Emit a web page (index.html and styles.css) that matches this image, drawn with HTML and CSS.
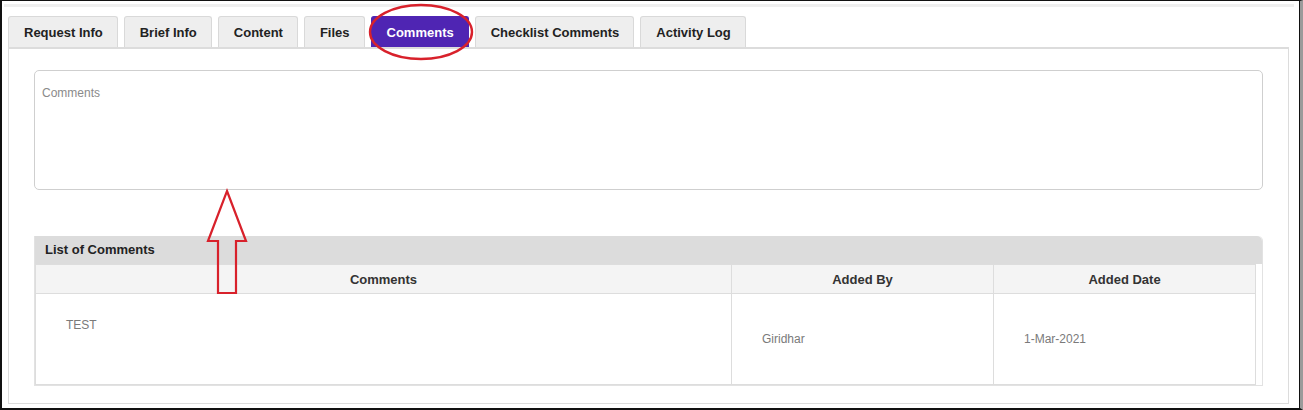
FILE: index.html
```html
<!DOCTYPE html>
<html lang="en">
<head>
    <meta charset="UTF-8">
    <meta name="viewport" content="width=device-width, initial-scale=1.0">
    <title>Request Comments</title>
    <link rel="stylesheet" href="styles.css">
</head>
<body>
    <div class="frame">
        <div class="top-strip"></div>

        <ul class="tabs">
            <li class="tab">Request Info</li>
            <li class="tab">Brief Info</li>
            <li class="tab">Content</li>
            <li class="tab">Files</li>
            <li class="tab active">Comments</li>
            <li class="tab">Checklist Comments</li>
            <li class="tab">Activity Log</li>
        </ul>

        <div class="panel">
            <textarea class="comment-box" placeholder="Comments"></textarea>

            <div class="list-box">
                <div class="list-title">List of Comments</div>
                <table class="comments-table">
                    <thead>
                        <tr>
                            <th class="col-comment">Comments</th>
                            <th class="col-by">Added By</th>
                            <th>Added Date</th>
                        </tr>
                    </thead>
                    <tbody>
                        <tr class="comment-row">
                            <td class="cell-top">TEST</td>
                            <td>Giridhar</td>
                            <td>1-Mar-2021</td>
                        </tr>
                    </tbody>
                </table>
            </div>
        </div>

        <!-- red markup drawn over the screenshot -->
        <svg class="markup" width="1303" height="410" viewBox="0 0 1303 410">
            <ellipse cx="421" cy="32" rx="51" ry="27" fill="none" stroke="#d8212b" stroke-width="2.4"/>
            <polygon points="227,191 246,241 236,241 236,293 218,293 218,241 208,241"
                     fill="none" stroke="#d8212b" stroke-width="2.2" stroke-linejoin="miter"/>
        </svg>
    </div>
</body>
</html>
```

FILE: styles.css
```css
/* Page */
body {
    margin: 0;
    font-family: "Liberation Sans", Arial, sans-serif;
    background-color: #fff;
}

.frame {
    position: relative;
    width: 1303px;
    height: 410px;
    box-sizing: border-box;
    border-top: 1px solid #111;
    border-left: 2px solid #111;
    border-bottom: 2px solid #111;
    border-right: 3px solid #9a9a9a;
    box-shadow: inset -1px 0 0 #111;
    padding: 3px 12px 0 6px;
}

.top-strip {
    height: 3px;
    background-color: #efefef;
    margin: 0 -6px 9px -4px;
}

/* Tabs */
.tabs {
    display: flex;
    gap: 6px;
    list-style: none;
    margin: 0;
    padding: 0;
}

.tab {
    height: 31px;
    line-height: 32px;
    padding: 0 14px 0 15px;
    background-color: #eeeeee;
    border: 1px solid #d9d9d9;
    border-bottom: none;
    border-radius: 3px 3px 0 0;
    box-sizing: border-box;
    font-size: 13px;
    font-weight: bold;
    color: #222;
}

.tab.active {
    background-color: #4f25b3;
    border-color: #4f25b3;
    color: #fff;
}

/* Panel */
.panel {
    width: 1281px;
    height: 357px;
    box-sizing: border-box;
    border: 1px solid #dcdcdc;
    border-top-width: 2px;
    padding: 21px 25px 0 25px;
}

.comment-box {
    display: block;
    width: 100%;
    height: 120px;
    box-sizing: border-box;
    border: 1px solid #cfcfcf;
    border-radius: 5px;
    padding: 15px 7px;
    resize: none;
    font-family: "Liberation Sans", Arial, sans-serif;
    font-size: 12px;
    color: #555;
    outline: none;
}

.comment-box::placeholder {
    color: #8a8a8a;
}

/* List of comments */
.list-box {
    margin-top: 46px;
    border: 1px solid #e2e2e2;
    border-top: none;
    border-radius: 0 5px 0 0;
    padding-right: 6px;
}

.list-title {
    height: 28px;
    line-height: 28px;
    padding-left: 10px;
    margin-right: -6px;
    background-color: #dcdcdc;
    border-radius: 0 5px 0 0;
    font-size: 13px;
    font-weight: bold;
    color: #222;
}

.comments-table {
    width: 100%;
    border-collapse: collapse;
    border: 1px solid #dddddd;
    border-top: none;
}

.comments-table th {
    height: 28px;
    padding: 0;
    background-color: #f4f4f4;
    border: 1px solid #dddddd;
    font-size: 13px;
    font-weight: bold;
    color: #333;
    text-align: center;
}

.col-comment {
    width: 695px;
}

.col-by {
    width: 261px;
}

.comment-row {
    height: 91px;
}

.comments-table td {
    padding: 0 30px;
    border: 1px solid #dddddd;
    font-size: 12px;
    color: #7a7a7a;
    vertical-align: middle;
}

.comments-table td.cell-top {
    vertical-align: top;
    padding-top: 24px;
}

/* Annotation layer */
.markup {
    position: absolute;
    top: -1px;
    left: -2px;
    pointer-events: none;
}
```
